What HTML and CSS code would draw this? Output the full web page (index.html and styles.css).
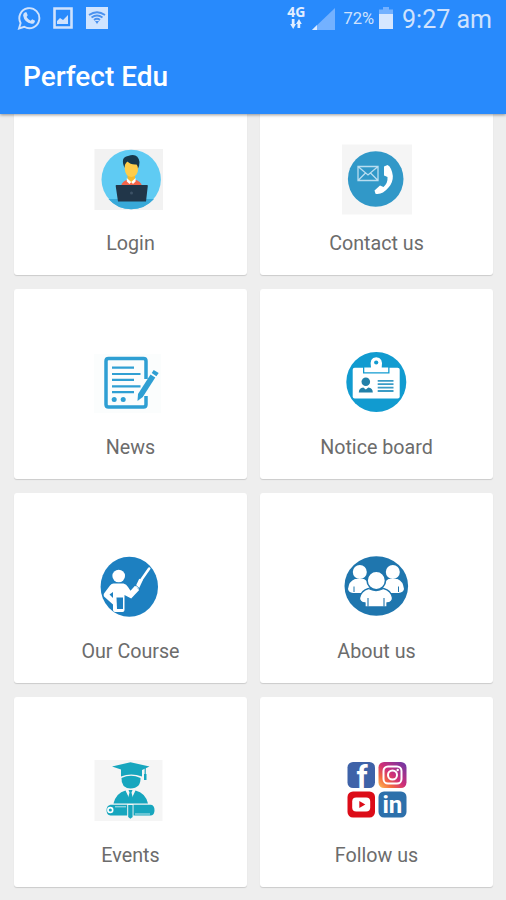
FILE: index.html
```
<!DOCTYPE html>
<html lang="en">
<head>
    <meta charset="UTF-8">
    <meta name="viewport" content="width=device-width, initial-scale=1.0">
    <title>Perfect Edu</title>
    <link rel="stylesheet" href="styles.css">
</head>
<body>
    <header class="header">
        <div class="status">
            <div class="status-left">
                <svg class="whatsapp" viewBox="0 0 24 24" width="24" height="24">
                    <path d="M2 22.500 3.600 17A10 10 0 1 1 7.300 20.800Z" fill="none" stroke="#cfe2fd" stroke-width="1.900"/>
                    <path d="M8.100 6.200 9.500 6.300 10.700 9.200 9.600 10.900Q11 13.500 13.700 14.700L15.200 13.200 18 14.700Q17.800 18 14.500 17.800 7.400 16.500 6.100 9.500 6.200 7.200 8.100 6.200Z" fill="#cfe2fd"/>
                </svg>
                <svg class="picture" viewBox="0 0 20 22" width="20" height="22">
                    <path d="M1.500 1.500h17v19h-17z" fill="none" stroke="#cfe2fd" stroke-width="2.600"/>
                    <path d="M4 17V14l3-3 3 2 5-5v9z" fill="#cfe2fd"/>
                </svg>
                <svg class="wifi" viewBox="0 0 22 22" width="22" height="22">
                    <path d="M0 0h22v22H0z" fill="#d0e4ff"/>
                    <path d="M3 8Q11 2.500 19 8M5.500 10.500Q11 6.500 16.500 10.500M8 13Q11 10.500 14 13" fill="none" stroke="#4a91ef" stroke-width="1.800"/>
                    <path d="M9 14h4L11 17z" fill="#4a91ef"/>
                </svg>
            </div>
            <div class="status-right">
                <div class="network">
                    <span>4G</span>
                    <svg viewBox="0 0 12 10" width="12" height="10">
                        <path d="M1.800 0h2.700v5H6L3.200 10 .2 5h1.600zM7.500 9h2.700V5h1.600L9 0 6 5h1.500z" fill="#e2eeff"/>
                    </svg>
                </div>
                <svg class="signal" viewBox="0 0 24 22" width="24" height="22">
                    <path d="M23 0v22H0z" fill="#73b1ff"/>
                    <path d="M5 17v5H0z" fill="#dceaff"/>
                </svg>
                <span class="percent">72%</span>
                <svg class="battery" viewBox="0 0 14 22" width="14" height="22">
                    <path d="M4 0h6v2.500h4V8H0V2.500h4z" fill="#73b1ff"/>
                    <path d="M0 7h14v15H0z" fill="#d6e7ff"/>
                </svg>
                <span class="clock">9:27 am</span>
            </div>
        </div>
        <h1 class="title">Perfect Edu</h1>
    </header>

    <main class="menu">
        <div class="card">
            <svg class="icon" viewBox="0 0 80 80">
                <rect x="4.500" y="9" width="68.500" height="61" fill="#f2f2f2"/>
                <circle cx="41.200" cy="39.500" r="29.700" fill="#5fcbf3"/>
                <path d="M18.500 59h45.500Q55 69.200 41.200 69.200 27 69.200 18.500 59z" fill="#38a9d9"/>
                <path d="M31 46Q32 41 38 39.500h6.500Q51 41 52 46z" fill="#f4644a"/>
                <path d="M37.500 35h7.500v5l-3.700 3-3.800-3z" fill="#f5b92e"/>
                <path d="M36.800 38 41.200 42l4.400-4v3.500L43 44l-1.800-2-1.700 2-2.700-2.500z" fill="#fff"/>
                <path d="M34.700 22h13.500v6Q48 36.500 41.300 37 35 36.500 34.700 28z" fill="#ffcd4a"/>
                <path d="M34.500 28Q30 17 38 16 48 12.500 49.500 22q0 4-1.500 6.500-.3-3-1.500-4-6 .5-9-3Q34.500 23.500 34.500 28z" fill="#17384b"/>
                <path d="M26.500 45h30.500q1 0 .8 1L56 61.500H28L25.700 46q-.2-1 .8-1z" fill="#213649"/>
                <circle cx="41.500" cy="53" r="1.500" fill="#3d5266"/>
            </svg>
            <span class="label">Login</span>
        </div>
        <div class="card">
            <svg class="icon" viewBox="0 0 80 80">
                <rect x="6" y="4.500" width="70" height="70" fill="#f5f5f5"/>
                <circle cx="39.700" cy="39" r="27.800" fill="#3198c8"/>
                <path d="M22 26.500h20v14h-20zl10 8.500 10-8.500M22 40.500l7.500-7.500M42 40.500 34.500 33" fill="none" stroke="#b9ddf0" stroke-width="1.300"/>
                <path d="M48 26.500 51.500 25q2 .5 3.500 4 6 13.500-8 23.500-3.500 2-7.500 1.300l-1-3.300 5.500-5 3.500 1.500q4.500-4 4-10l-3.500-1.500z" fill="#fff"/>
            </svg>
            <span class="label">Contact us</span>
        </div>
        <div class="card">
            <svg class="icon" viewBox="0 0 80 80">
                <rect x="4" y="10" width="67" height="59" fill="#fbfdfd"/>
                <g fill="none" stroke="#2f9fd3">
                    <path d="M56 35V17q0-2.500-2.500-2.500H18.500Q16 14.500 16 17v43.500q0 2.500 2.500 2.500h35q2.500 0 2.500-2.500V52" stroke-width="3.500"/>
                    <path d="M22 23.600h22M22 30h28.500M22 35.800h22M22 42.300h28.500M22 48.200h22" stroke-width="2.200"/>
                </g>
                <circle cx="24.200" cy="55.600" r="2.500" fill="#2f9fd3"/>
                <circle cx="33.200" cy="55.600" r="2.500" fill="#2f9fd3"/>
                <path d="M48 50 60.500 30.500l4.800 3L52.800 53 47.500 57z" fill="#2f9fd3"/>
                <path d="m61.700 28.900 2-3 5 3-2.300 3.400z" fill="#2f9fd3"/>
            </svg>
            <span class="label">News</span>
        </div>
        <div class="card">
            <svg class="icon" viewBox="0 0 80 80">
                <circle cx="40.300" cy="38" r="30" fill="#119bd0"/>
                <rect x="16.700" y="23.700" width="47" height="30.800" rx="2" fill="#fff"/>
                <path d="M27 22h26.500v7.500H27z" fill="#119bd0"/>
                <path d="M28.300 23.500h6.700Q33 13.500 40.200 13.300q7.300.2 5.500 10.200h6.500v4.700H28.300z" fill="#fff"/>
                <circle cx="40.200" cy="18.500" r="2.100" fill="#119bd0"/>
                <circle cx="29.800" cy="37.800" r="4.300" fill="#2180a9"/>
                <path d="M22.800 48.500q0-4.500 4.500-5l2.500 2 2.500-2q4.500.5 4.500 5z" fill="#2180a9"/>
                <path d="M41.700 36.800H57.500M41.700 40.200H57.500M41.700 43.600H57.500M41.700 47H57.500" stroke="#3b9cc6" stroke-width="1.800"/>
            </svg>
            <span class="label">Notice board</span>
        </div>
        <div class="card">
            <svg class="icon" viewBox="0 0 80 80">
                <ellipse cx="39.300" cy="38.700" rx="28.700" ry="30" fill="#1d80c1"/>
                <circle cx="28.700" cy="28" r="6.300" fill="#fff"/>
                <path d="M23.500 35.500h10q3 .5 4.500 3.500l2.500 3.800 4.500-5 4.200 4.200-8 8.500-6.700-3.500V62q0 2-2 2H25q-2 0-2-2v-5.500l-9-8q-.8-1.500 0-3L20 37.500q1.500-2 3.500-2z" fill="#fff"/>
                <path d="m19.500 46.500 3.500-2.500v6z" fill="#1d80c1"/>
                <path d="M26.500 49.500H33V61h-6z" fill="#1d80c1"/>
                <path d="m47 40 4-8.500" stroke="#fff" stroke-width="4"/>
                <path d="m50.500 33 8.700-12.500" stroke="#fff" stroke-width="2.600" stroke-linecap="round"/>
                <path d="m45 36.500 5.500 5" stroke="#1d80c1" stroke-width=".8"/>
            </svg>
            <span class="label">Our Course</span>
        </div>
        <div class="card">
            <svg class="icon" viewBox="0 0 80 80">
                <ellipse cx="40.300" cy="38" rx="31.800" ry="29.800" fill="#1f76ae"/>
                <g fill="#fff">
                    <circle cx="23.800" cy="24" r="7"/>
                    <circle cx="56.800" cy="24" r="7"/>
                    <path d="M19 31h9q4 2 5.500 6v8H17q-4.500-.5-5-4 1-8 7-10zM61.500 31h-9q-4 2-5.500 6v8h15.500q5-.5 5.500-4-1-8-6.500-10z"/>
                </g>
                <path d="M18 38.500v5.500M62.500 38.500v5.500" stroke="#1f76ae"/>
                <circle cx="40.300" cy="32.500" r="9.200" fill="#fff" stroke="#1f76ae" stroke-width="1.600"/>
                <path d="M32.500 40.500Q40 44.500 47.500 40.500q8 2 9 9.500 0 4.500-5.500 5V59H29v-4q-5.500-.5-5.500-5 1.500-7.500 9-9.500z" fill="#fff" stroke="#1f76ae" stroke-width="1.300"/>
                <path d="M32 50v8.500M48 50v8.500" stroke="#1f76ae" stroke-width="1.100"/>
            </svg>
            <span class="label">About us</span>
        </div>
        <div class="card">
            <svg class="icon" viewBox="0 0 80 80">
                <rect x="4.500" y="8" width="68" height="61" fill="#f5f5f5"/>
                <g fill="#17a6be">
                    <path d="m22 14.500 18.500-4.200L59.500 14.500 52 18v6.500Q41 20.500 31 24.500V17.500z"/>
                    <path d="M31.500 26Q41 21.500 50.500 26q.5 10-10 10.500-9.500-.5-9-10.500z"/>
                    <path d="M35.500 38.500 40.500 49l5-10.500q10 2.500 12.500 13H23.500q2.500-10.500 12-13z"/>
                    <path d="m38.500 38h4l-1 2.500 1.500 6-2.500 3.500-2.500-3.500 1.500-6z"/>
                    <path d="M20.500 52.700h16.700v10.800H20.500q-4-.5-4-5.200t4-5.600zM43.500 52.700H61q3.500.5 3.500 5.600T61 63.500H43.500z"/>
                    <path d="M38.200 53h4.400v12l-2.200 1.800-2.200-1.800z"/>
                    <path d="M54 22h2.500v6H54z"/>
                </g>
                <path d="M55.200 16v7" stroke="#17a6be" stroke-width="1.200"/>
                <circle cx="20.300" cy="58" r="2.400" fill="none" stroke="#fff" stroke-width="1.600"/>
                <path d="M25 54.800h11M45 62h15" stroke="#fff" stroke-width=".7"/>
            </svg>
            <span class="label">Events</span>
        </div>
        <div class="card">
            <svg class="icon" viewBox="0 0 80 80">
                <defs>
                    <linearGradient id="insta" x1="0" y1="1" x2="1" y2="0">
                        <stop offset="0" stop-color="#fdc35a"/>
                        <stop offset=".25" stop-color="#f4693f"/>
                        <stop offset=".5" stop-color="#cf2f78"/>
                        <stop offset="1" stop-color="#6638a8"/>
                    </linearGradient>
                </defs>
                <rect x="11.500" y="10" width="27.500" height="26" rx="5.500" fill="#3e62a8"/>
                <rect x="42.500" y="10" width="28" height="26" rx="5.500" fill="url(#insta)"/>
                <rect x="11.500" y="39.500" width="27.500" height="26" rx="5.500" fill="#dc0c18"/>
                <rect x="42.500" y="39.500" width="28" height="26" rx="5.500" fill="#2d70ab"/>
                <text class="facebook" x="20.500" y="35.500">f</text>
                <rect x="47.500" y="14.500" width="18" height="17" rx="4.500" fill="none" stroke="#fff" stroke-width="2"/>
                <circle cx="56.500" cy="23" r="4.500" fill="none" stroke="#fff" stroke-width="2"/>
                <circle cx="61.700" cy="18" r="1.200" fill="#fff"/>
                <rect x="16.200" y="45.500" width="18" height="14" rx="4" fill="#fff"/>
                <path d="m23.300 49 6 3.500-6 3.500z" fill="#dc0c18"/>
                <text class="linkedin" x="46.500" y="60.500">in</text>
            </svg>
            <span class="label">Follow us</span>
        </div>
    </main>
</body>
</html>
```
FILE: styles.css
```
* {
    box-sizing: border-box;
}
body {
    margin: 0;
    height: 900px;
    overflow: hidden;
    background: #eee;
    font-family: Roboto, "Liberation Sans", sans-serif;
}
.header {
    position: relative;
    height: 114px;
    background: #288afc;
    box-shadow: 0 1px 3px rgba(0, 0, 0, 0.4);
}
.status {
    display: flex;
    justify-content: space-between;
    height: 38px;
    padding: 0 14px 0 17px;
    color: #cfe2fd;
}
.status-left,
.status-right {
    display: flex;
    align-items: flex-start;
}
.whatsapp {
    margin-top: 6px;
}
.picture {
    margin: 7px 0 0 12px;
}
.wifi {
    margin: 7px 0 0 13px;
}
.network {
    display: flex;
    flex-direction: column;
    align-items: center;
    margin-top: 5px;
    font: bold 14px/14px "Open Sans", sans-serif;
    color: #e2eeff;
}
.signal {
    margin: 8px 7px 0 7px;
}
.percent {
    margin-top: 8px;
    font-size: 16.5px;
    line-height: 22px;
}
.battery {
    margin: 7px 9px 0 5px;
}
.clock {
    margin-top: 4px;
    font-size: 25px;
    line-height: 31px;
}
.title {
    margin: 22px 0 0 23px;
    color: #fff;
    font-size: 28px;
    font-weight: 500;
    line-height: 34px;
}
.menu {
    display: grid;
    grid-template-columns: 233px 233px;
    grid-auto-rows: 190px;
    gap: 14px 13px;
    margin: -29.5px 0 0 14px;
}
.card {
    display: flex;
    flex-direction: column;
    align-items: center;
    padding-top: 55px;
    background: #fff;
    border-radius: 3px;
    box-shadow: 0 1px 1px rgba(0, 0, 0, 0.15);
}
.icon {
    width: 80px;
    height: 80px;
    margin-left: -1px;
}
.label {
    margin-top: 12px;
    color: #6c6c6c;
    font-size: 19.7px;
    line-height: 24px;
}
.facebook {
    fill: #fff;
    font: bold 31px Roboto, sans-serif;
}
.linkedin {
    fill: #fff;
    font: bold 24px Roboto, sans-serif;
}
```
